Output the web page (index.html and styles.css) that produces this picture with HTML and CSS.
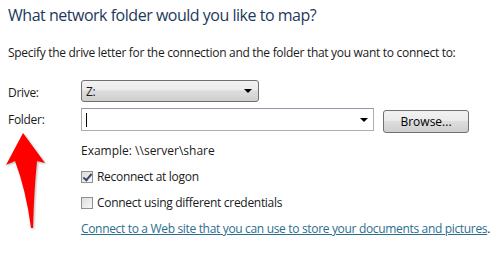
FILE: index.html
```html
<!DOCTYPE html>
<html>
  <head>
    <title>Map Network Drive</title>
    <link rel="stylesheet" href="styles.css">
  </head>
  <body>
    <div class="page">
      <h1 class="title">What network folder would you like to map?</h1>
      <p class="intro">Specify the drive letter for the connection and the folder that you want to connect to:</p>
      <div class="form">
        <label class="lbl lbl-drive">Drive:</label>
        <div class="combo drive">
          <span class="combo-text">Z:</span>
          <span class="drop"></span>
        </div>
        <label class="lbl lbl-folder">Folder:</label>
        <div class="folder-row">
          <div class="edit">
            <span class="caret"></span>
            <span class="drop"></span>
          </div>
          <button class="browse">Browse...</button>
        </div>
        <div class="example">Example: \\server\share</div>
        <label class="check"><span class="box checked"></span>Reconnect at logon</label>
        <label class="check"><span class="box"></span>Connect using different credentials</label>
        <div class="web"><a href="#">Connect to a Web site that you can use to store your documents and pictures</a>.</div>
      </div>
      <svg class="red-arrow" width="50" height="110" viewBox="0 0 50 110">
        <path d="M23 3 L45 33 L37 31 Q34 60 33 98 L31 98 Q26 60 15 31 L6 35 Z" fill="#ff0000"/>
      </svg>
    </div>
  </body>
</html>
```

FILE: styles.css
```css
html, body {
  margin: 0;
  padding: 0;
  background: #fff;
}
body {
  font-family: "Open Sans", "Noto Sans", sans-serif;
  font-size: 12px;
  color: #1a1a1a;
  letter-spacing: -0.3px;
  width: 503px;
  height: 258px;
  overflow: hidden;
}
.page {
  position: relative;
  padding: 4px 8px 0;
}
.title {
  margin: 0;
  font-weight: normal;
  font-size: 16px;
  line-height: 22px;
  color: #1e395b;
  letter-spacing: -0.48px;
}
.intro {
  margin: 18px 0 0;
  line-height: 18px;
}
.form {
  display: grid;
  grid-template-columns: 73px 1fr;
  margin-top: 18px;
  align-items: center;
}
.lbl {
  grid-column: 1;
}
.lbl-drive {
  align-self: start;
  margin-top: 4px;
}
.lbl-folder {
  align-self: start;
  margin-top: 9px;
}
.form > .combo,
.form > .folder-row,
.form > .example,
.form > .check,
.form > .web {
  grid-column: 2;
}
.combo {
  box-sizing: border-box;
  height: 22px;
  width: 178px;
  border: 1px solid #707070;
  border-radius: 3px;
  background: linear-gradient(#f2f2f2 0%, #ebebeb 45%, #dddddd 50%, #cfcfcf 100%);
  display: flex;
  align-items: center;
  padding: 0 6px 0 4px;
}
.combo-text {
  flex: 1;
}
.drop {
  width: 0;
  height: 0;
  border-left: 4px solid transparent;
  border-right: 4px solid transparent;
  border-top: 4px solid #000;
}
.folder-row {
  display: flex;
  align-items: flex-start;
  margin-top: 6px;
}
.edit {
  box-sizing: border-box;
  width: 293px;
  height: 23px;
  border: 1px solid #abadb3;
  border-top-color: #8e9aa5;
  display: flex;
  align-items: center;
  padding: 0 5px 0 4px;
}
.caret {
  width: 1px;
  height: 14px;
  background: #000;
  flex: none;
  margin-right: auto;
}
.browse {
  box-sizing: border-box;
  margin: 2px 0 0 9px;
  width: 86px;
  height: 23px;
  border: 1px solid #707070;
  border-radius: 3px;
  background: linear-gradient(#f2f2f2 0%, #ebebeb 45%, #dddddd 50%, #cfcfcf 100%);
  font: inherit;
  letter-spacing: 0;
  color: #000;
  padding: 0;
}
.example {
  margin-top: 9px;
  line-height: 18px;
  letter-spacing: 0;
}
.check {
  display: flex;
  align-items: center;
  margin-top: 8px;
  line-height: 18px;
}
.box {
  box-sizing: border-box;
  width: 12px;
  height: 12px;
  border: 1px solid #8e8f8f;
  background: linear-gradient(135deg, #dcdcdc, #f8f8f8);
  margin-right: 4px;
  position: relative;
}
.box.checked::after {
  content: "";
  position: absolute;
  left: 3px;
  top: 0px;
  width: 3px;
  height: 7px;
  border: solid #3b4a6b;
  border-width: 0 2px 2px 0;
  transform: rotate(40deg);
}
.web {
  margin-top: 8px;
  line-height: 18px;
  white-space: nowrap;
  letter-spacing: -0.33px;
}
.web a {
  color: #2a6e8f;
  text-decoration: underline;
}
.red-arrow {
  position: absolute;
  left: 0;
  top: 130px;
  filter: drop-shadow(1px 1px 1px rgba(0,0,0,0.3));
}
```
